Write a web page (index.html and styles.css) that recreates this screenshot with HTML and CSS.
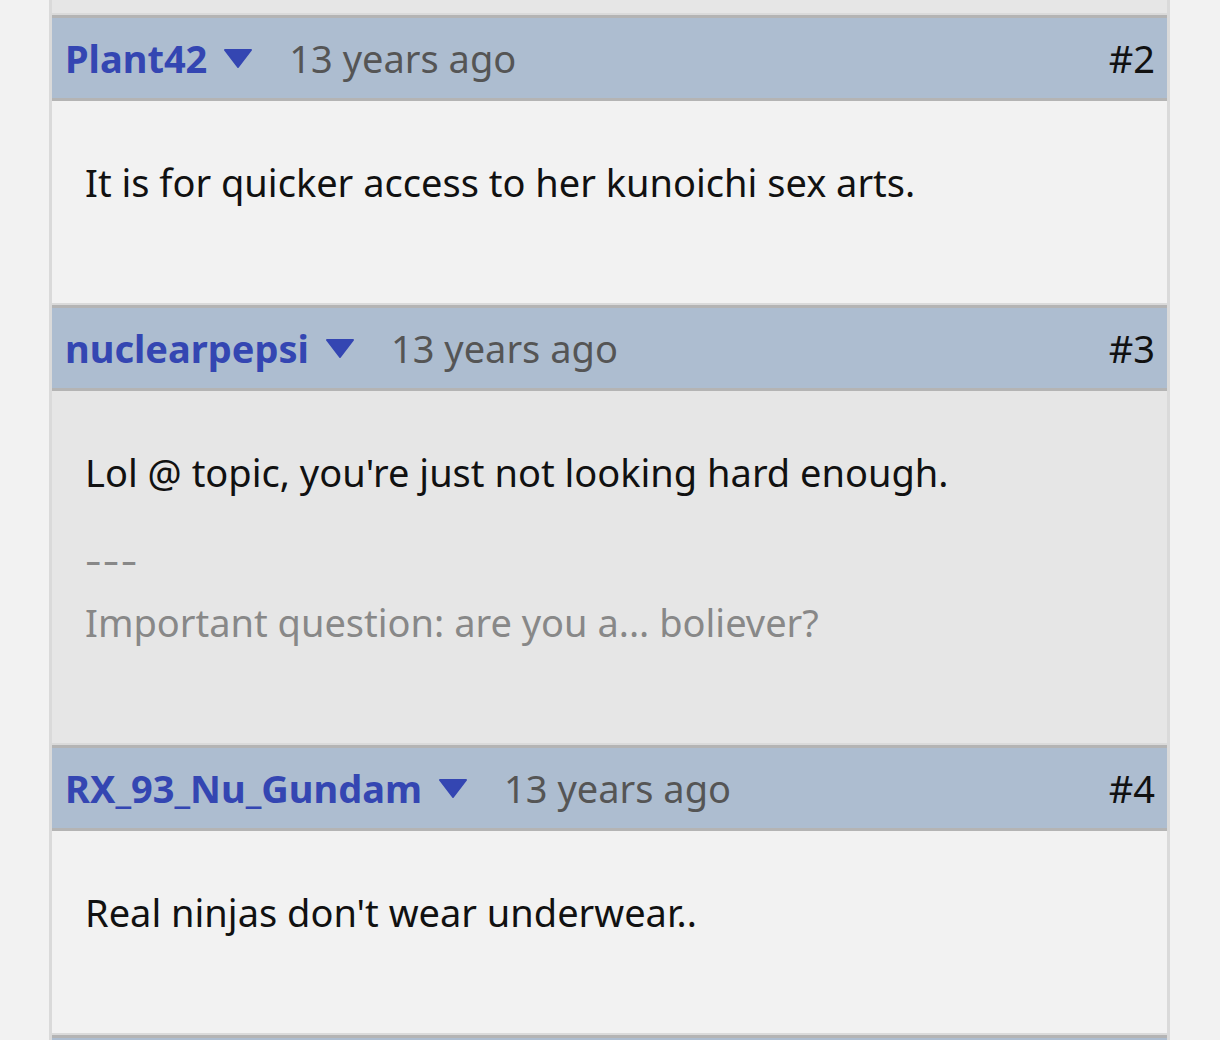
FILE: index.html
```html
<!DOCTYPE html>
<html>
<head>
<meta charset="utf-8">
<link rel="stylesheet" href="styles.css">
</head>
<body>
<div class="thread">
  <div class="post-body alt stub"></div>

  <div class="post">
    <div class="post-head">
      <a class="user">Plant42</a>
      <svg class="caret" viewBox="0 0 28 19"><polygon points="1,1 27,1 14,18" /></svg>
      <span class="time">13 years ago</span>
      <span class="num">#2</span>
    </div>
    <div class="post-body">
      <p class="msg">It is for quicker access to her kunoichi sex arts.</p>
    </div>
  </div>

  <div class="post">
    <div class="post-head">
      <a class="user">nuclearpepsi</a>
      <svg class="caret" viewBox="0 0 28 19"><polygon points="1,1 27,1 14,18" /></svg>
      <span class="time">13 years ago</span>
      <span class="num">#3</span>
    </div>
    <div class="post-body alt">
      <p class="msg">Lol @ topic, you're just not looking hard enough.</p>
      <div class="sig">
        <div><span class="sig-rule">---</span></div>
        <div class="sig-text">Important question: are you a... boliever?</div>
      </div>
    </div>
  </div>

  <div class="post">
    <div class="post-head">
      <a class="user">RX_93_Nu_Gundam</a>
      <svg class="caret" viewBox="0 0 28 19"><polygon points="1,1 27,1 14,18" /></svg>
      <span class="time">13 years ago</span>
      <span class="num">#4</span>
    </div>
    <div class="post-body">
      <p class="msg">Real ninjas don't wear underwear..</p>
    </div>
  </div>

  <div class="post">
    <div class="post-head"></div>
  </div>
</div>
</body>
</html>
```

FILE: styles.css
```css
html, body {
  margin: 0;
  padding: 0;
  background: #f2f2f2;
  font-family: "Noto Sans", "Liberation Sans", sans-serif;
}

.thread {
  margin-left: 49px;
  width: 1115px;
  height: 1040px;
  overflow: hidden;
  border-left: 3px solid #dadada;
  border-right: 3px solid #dadada;
  background: #dadada;
  display: flex;
  flex-direction: column;
  gap: 2px;
}

.post-body {
  background: #f2f2f2;
  padding: 54px 33px 94px;
  font-size: 38px;
  line-height: 54px;
  color: #111;
}

.post-body.alt {
  background: #e6e6e6;
}

.stub {
  height: 13px;
  padding: 0;
  flex: none;
}

.msg {
  margin: 0;
}

.post {
  flex: none;
}

.post-head {
  height: 80px;
  background: #adbdd0;
  border-top: 3px solid #b4b4b4;
  border-bottom: 3px solid #b4b4b4;
  display: flex;
  align-items: center;
  padding: 0 12px 0 13px;
  font-size: 38px;
}

.user {
  color: #3446b2;
  font-weight: 700;
}

.caret {
  width: 28px;
  height: 19px;
  margin-left: 17px;
  fill: #3446b2;
  stroke: #3446b2;
  stroke-width: 2;
  stroke-linejoin: round;
}

.time {
  margin-left: 37px;
  color: #555;
}

.num {
  margin-left: auto;
  color: #111;
}

.sig {
  margin-top: 33px;
  color: #888;
}

.sig-rule {
  display: inline-block;
  letter-spacing: 1px;
  transform: scaleX(1.35);
  transform-origin: left center;
}

.sig-text {
  margin-top: 9px;
}
```
